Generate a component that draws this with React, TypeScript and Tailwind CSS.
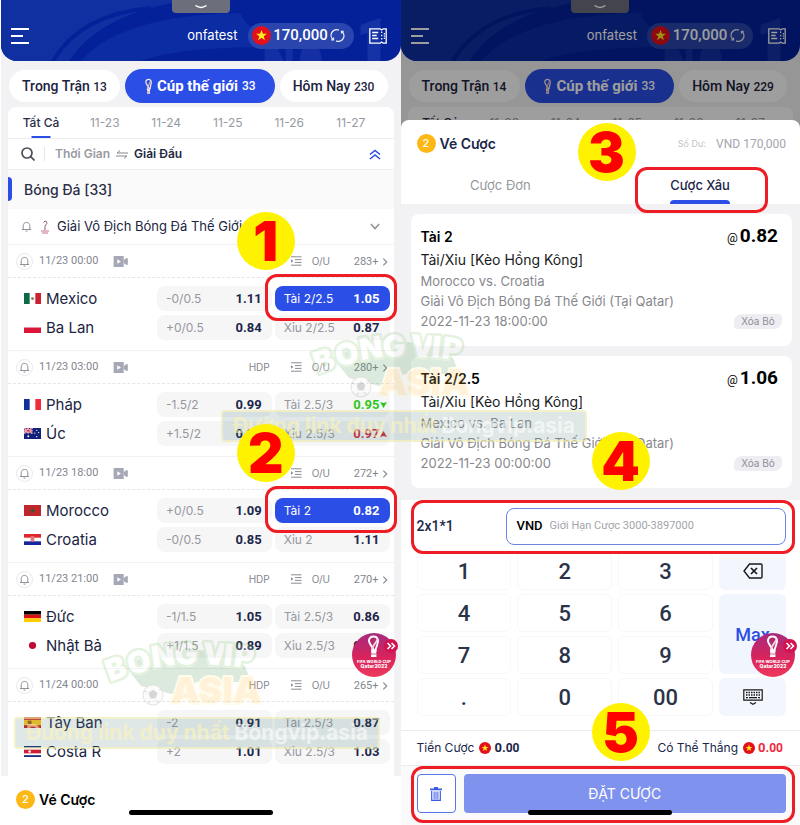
import React from "react";
import clsx from "clsx";

const DIN = "font-[Roboto,'Noto_Sans',sans-serif]";
const UI = "font-[Inter,'Noto_Sans',sans-serif]";

/* ---------- icons ---------- */

function VnCoin({ className }: { className: string }) {
  return (
    <svg viewBox="0 0 20 20" className={className} aria-hidden="true">
      <circle cx="10" cy="10" r="10" fill="#e3101c" />
      <path
        d="M10 4.2l1.5 4h4.2l-3.4 2.6 1.3 4.1L10 12.4l-3.6 2.5 1.3-4.1-3.4-2.6h4.2z"
        fill="#ffec1c"
      />
    </svg>
  );
}

function RefreshIcon() {
  return (
    <svg viewBox="0 0 16 16" className="h-[15px] w-[15px]" fill="none" stroke="#e8ebf8" strokeWidth="1.4" aria-hidden="true">
      <path d="M3.400 12.400A6 6 0 0 1 9.500 2.200" />
      <path d="M12.600 3.600A6 6 0 0 1 6.500 13.800" />
      <path d="M1.300 12.600h2.500v-2.400M14.700 3.400h-2.500v2.400" strokeWidth="1.200" />
    </svg>
  );
}

function TicketIcon() {
  return (
    <svg viewBox="0 0 18 16" className="h-4 w-[18px]" fill="none" stroke="#fff" strokeWidth="1.3" aria-hidden="true">
      <path d="M.8.800h10.400l1.500 1.200 1.500-1.200h3v14.400h-3l-1.500-1.200-1.500 1.200H.8z" />
      <path d="M3.200 4.500h6M3.200 7.500h4.500M3.200 10.500h6" />
      <path d="M12.700 3.500v9.500" strokeDasharray="1.600 1.600" />
      <path d="M15.400 5v6" strokeDasharray="1.400 1" />
    </svg>
  );
}

function TrophyIcon({ className }: { className: string }) {
  return (
    <svg viewBox="0 0 10 18" className={className} fill="none" aria-hidden="true">
      <path d="M6.800 12C6.500 9 8.500 6.500 8 3.600 7.600 1.700 6.400 1 5 1S2.400 1.700 2 3.600C1.600 6 4.500 8 6 12" stroke="#f3e9ee" strokeWidth="1.400" />
      <path d="M7.500 3C6 6 3.500 8.500 3.600 13" stroke="#d9b9a8" strokeWidth="1.200" />
      <path d="M3.600 11.500h3l.2 5.500H3.400z" fill="#f3e9ee" />
      <path d="M3.300 15h3.400" stroke="#c58f86" strokeWidth="1" />
    </svg>
  );
}

function BellIcon() {
  return (
    <svg viewBox="0 0 12 12" className="h-[11px] w-[11px] shrink-0" fill="none" stroke="#85878f" strokeWidth="1" aria-hidden="true">
      <path d="M1 9.300h10M2.400 9.300V5.200C2.400 3 4 1.500 6 1.500s3.600 1.500 3.600 3.700v4.100" />
      <path d="M5 11h2" />
    </svg>
  );
}

function CameraIcon() {
  return (
    <svg viewBox="0 0 16 12" className="h-[11px] w-[15px]" fill="#a6a9b5" aria-hidden="true">
      <path fillRule="evenodd" d="M.5 0H11.500v12H.5zM4.500 3.500v5L8.500 6z" />
      <path d="M11.500 4l2-.8V2.500H16v7h-2.500v-.8l-2-.8z" />
    </svg>
  );
}

function ListIcon() {
  return (
    <svg viewBox="0 0 12 10" className="h-[10px] w-3" stroke="#8a8c94" strokeWidth="1" fill="none" aria-hidden="true">
      <path d="M1 .8h10.500M5 3.600h6.500M5 6.400h6.500M1 9.200h10.500" />
      <path d="M1 3.300v3.400L3.300 5z" fill="#8a8c94" stroke="none" />
    </svg>
  );
}

function Chevron({ className, points, viewBox = "0 0 8 12" }: { className: string; points: string; viewBox?: string }) {
  return (
    <svg viewBox={viewBox} className={className} fill="none" stroke="currentColor" strokeWidth="1.700" aria-hidden="true">
      <polyline points={points} />
    </svg>
  );
}

function Flag({ code }: { code: string }) {
  const art: Record<string, React.ReactNode> = {
    mx: (<><path fill="#fff" d="M0 0h18v12H0z" /><path fill="#0b6b49" d="M0 0h6v12H0z" /><path fill="#cd1f32" d="M12 0h6v12h-6z" /><circle cx="9" cy="6" r="1.500" fill="#8c6b45" /></>),
    pl: (<><path fill="#fff" d="M0 0h18v6H0z" /><path fill="#dc1638" d="M0 6h18v6H0z" /></>),
    fr: (<><path fill="#fff" d="M0 0h18v12H0z" /><path fill="#11309a" d="M0 0h6v12H0z" /><path fill="#f02b3d" d="M12 0h6v12h-6z" /></>),
    au: (<><path fill="#12227c" d="M0 0h18v12H0z" /><path d="M0 0l9 6M9 0L0 6M4.500 0v6M0 3h9" stroke="#fff" strokeWidth="1.600" /><path d="M4.500 0v6M0 3h9M0 0l9 6M9 0L0 6" stroke="#d8213c" strokeWidth=".700" /><circle cx="4.500" cy="9" r="1" fill="#fff" /><circle cx="13.500" cy="2.500" r=".700" fill="#fff" /><circle cx="13.500" cy="9.500" r=".700" fill="#fff" /><circle cx="11.500" cy="5.500" r=".700" fill="#fff" /><circle cx="15.500" cy="5" r=".700" fill="#fff" /></>),
    ma: (<><path fill="#c0272d" d="M0 0h18v12H0z" /><path d="M9 3l.8 2.200h2.300l-1.900 1.400.7 2.300L9 7.500 7.100 8.900l.7-2.300L5.900 5.200h2.300z" fill="#2f5a2e" /></>),
    hr: (<><path fill="#fff" d="M0 0h18v12H0z" /><path fill="#e0252b" d="M0 0h18v4H0z" /><path fill="#17259a" d="M0 8h18v4H0z" /><path fill="#e8777b" d="M7 2.500h4v4.500L9 8.500 7 7z" /></>),
    de: (<><path fill="#000" d="M0 0h18v4H0z" /><path fill="#dd1010" d="M0 4h18v4H0z" /><path fill="#ffce00" d="M0 8h18v4H0z" /></>),
    jp: (<><path fill="#fff" d="M0 0h18v12H0z" /><circle cx="9" cy="6" r="3.800" fill="#c00a35" /></>),
    es: (<><path fill="#c8191f" d="M0 0h18v12H0z" /><path fill="#ffc61a" d="M0 3h18v6H0z" /><path fill="#a5572b" d="M4 4h4v4H4z" /></>),
    cr: (<><path fill="#17307c" d="M0 0h18v12H0z" /><path fill="#fff" d="M0 2h18v8H0z" /><path fill="#ce1c31" d="M0 4h18v4H0z" /><circle cx="6" cy="6" r="1.400" fill="#fff" /></>),
  };
  return (
    <svg viewBox="0 0 18 12" preserveAspectRatio="none" className="h-[11px] w-[17px] shrink-0" aria-hidden="true">
      {art[code]}
    </svg>
  );
}

/* ---------- tutorial marks ---------- */

function Step({ n, className }: { n: number; className: string }) {
  return (
    <span
      className={clsx(
        "pointer-events-none absolute z-40 flex h-[58px] w-[58px] items-center justify-center rounded-full bg-[#fff200] text-[55px] leading-none font-black text-[#ff0000]",
        UI,
        className,
      )}
    >
      {n}
    </span>
  );
}

function Ring({ className }: { className: string }) {
  return <span className={clsx("pointer-events-none absolute z-30 rounded-xl border-[3px] border-[#ee1c24]", className)} />;
}

function WatermarkLogo({ className }: { className: string }) {
  return (
    <svg viewBox="0 0 160 74" className={clsx("pointer-events-none absolute z-20 h-[74px] w-[160px] overflow-visible opacity-20", className)} aria-hidden="true">
      <path d="M20 30Q80-4 140 30l6 16H92l-26 12-30-8z" fill="#4f9a55" />
      <g fontFamily="Inter, sans-serif" fontWeight="900" strokeLinejoin="round">
        <g fill="#fff" stroke="#7fc36a" strokeWidth="5" paintOrder="stroke" fontSize="30">
          <text x="5" y="46" transform="rotate(-20 5 46)">B</text>
          <text x="25" y="39" transform="rotate(-14 25 39)">O</text>
          <text x="48" y="32" transform="rotate(-8 48 32)">N</text>
          <text x="70" y="29" transform="rotate(-2 70 29)">G</text>
          <text x="97" y="28" transform="rotate(4 97 28)">V</text>
          <text x="118" y="29" transform="rotate(6 118 29)">I</text>
          <text x="128" y="30" transform="rotate(8 128 30)">P</text>
        </g>
        <text x="66" y="67" fontSize="36" fill="#ffc040" stroke="#fff3b0" strokeWidth="4" paintOrder="stroke">ASIA</text>
      </g>
      <circle cx="48" cy="59" r="10" fill="#eee" stroke="#777" />
      <path d="M48 54l4 3-1.500 5h-5L44 57zM39 55l3 1M54 53l3 1M44 68l1-3M53 67l-2-3" fill="#333" stroke="#555" />
    </svg>
  );
}

function WatermarkBar({ className }: { className: string }) {
  return (
    <div
      className={clsx(
        "pointer-events-none absolute z-20 flex h-8 w-[366px] items-center justify-center rounded border-2 border-[#fff6b8]/60 bg-[#4f7d78]/18 text-[21px] font-bold whitespace-pre",
        UI,
        className,
      )}
    >
      <span className="text-[#fff5b4]/55">Đường link duy nhất </span>
      <span className="text-white/55">Bongvip.asia</span>
    </div>
  );
}

function CupBadge() {
  return (
    <button type="button" aria-label="FIFA World Cup Qatar 2022" className="absolute top-[632px] right-1 z-30 h-[46px] w-[46px]">
      <svg viewBox="0 0 46 46" className="h-[46px] w-[46px] overflow-visible">
        <defs>
          <linearGradient id="cup" x1="0" y1="0" x2="0" y2="1">
            <stop offset="0" stopColor="#a62c7e" />
            <stop offset=".55" stopColor="#d8235c" />
            <stop offset="1" stopColor="#ee3a5c" />
          </linearGradient>
        </defs>
        <circle cx="23" cy="23" r="22" fill="url(#cup)" />
        <path d="M24.500 20C24 15 28 12 27 8c-.6-2.600-2.300-3.500-4.500-3.500S18.600 5.400 18 8c-.8 4 4 6 5.500 12" fill="none" stroke="#fff" strokeWidth="1.900" />
        <path d="M26.500 7C25 12 20 14 21 20" fill="none" stroke="#f2d6df" strokeWidth="1.800" />
        <path d="M20.500 17.500h4.500l.5 7.500h-5.500z" fill="#fff" />
        <path d="M20 22h5.500" stroke="#c26a86" />
        <g fill="#fff" fontFamily="Inter, sans-serif" fontWeight="800" textAnchor="middle">
          <text x="23" y="31" fontSize="4">FIFA WORLD CUP</text>
          <text x="23" y="36" fontSize="5">Qatar2022</text>
        </g>
        <circle cx="40" cy="14" r="7" fill="#d3124f" />
        <path d="M36.500 11l3 3-3 3M40.500 11l3 3-3 3" fill="none" stroke="#fff" strokeWidth="1.600" />
      </svg>
    </button>
  );
}

/* ---------- shared top ---------- */

function TopBar() {
  return (
    <header className={clsx("relative flex h-[61px] items-center overflow-hidden rounded-b-2xl bg-[#04219a] pt-[10px] pr-[14px] pl-[10px] text-white", DIN)}>
      <svg viewBox="0 0 400 61" preserveAspectRatio="none" className="absolute inset-0 h-full w-full" aria-hidden="true">
        <path d="M0 0h190Q100 12 68 61H0z" fill="#1030a2" />
        <path d="M80 61Q120 15 240 13q5 22 70 34Q180 45 140 61z" fill="#0c2ca3" />
        <path d="M52 61Q80 14 150 8" stroke="#04219a" strokeWidth="4" fill="none" />
        <path d="M264 61V40h9l10 21zM285 61V40h7v21zM299 61q0-16 11-16t11 16z" fill="#132fa3" />
        <path d="M360 25l20-7v43h-13V33l-7 2z" fill="#1633a5" />
      </svg>
      <span className="absolute top-0 left-1/2 flex h-[13px] w-[58px] -translate-x-1/2 justify-center rounded-b bg-[#6d6e7c] pt-[5px]">
        <svg viewBox="0 0 12 4" className="h-1 w-3" fill="none" stroke="#fff" strokeWidth="1.500" aria-hidden="true">
          <path d="M.5.5Q6 4.500 11.500.5" />
        </svg>
      </span>
      <button type="button" aria-label="Menu" className="relative flex h-4 flex-col justify-between">
        <span className="h-0.5 w-[18px] bg-white" />
        <span className="h-0.5 w-3 bg-white" />
        <span className="h-0.5 w-[18px] bg-white" />
      </button>
      <span className={clsx("relative ml-auto text-[13px]", UI)}>onfatest</span>
      <span className="relative ml-[10px] flex h-[26px] w-[106px] items-center justify-between rounded-full bg-[#2a46ae] pr-2 pl-1">
        <VnCoin className="h-[19px] w-[19px]" />
        <span className="text-[15px] font-medium">170,000</span>
        <RefreshIcon />
      </span>
      <button type="button" aria-label="Phiếu cược" className="relative ml-[15px]">
        <TicketIcon />
      </button>
    </header>
  );
}

function FilterPills({ live, today }: { live: string; today: string }) {
  return (
    <nav className={clsx("flex items-center gap-[5px] px-2 pt-2 pr-[13px] font-medium text-[#1c2340]", DIN)}>
      <button type="button" className="h-8 w-[111px] rounded-full bg-white text-[14px] whitespace-nowrap">
        Trong Trận <span className="text-[12px]">{live}</span>
      </button>
      <button type="button" className="flex h-[34px] flex-1 items-center justify-center gap-1 rounded-full bg-[#2b4ee6] text-[15px] font-bold whitespace-nowrap text-white">
        <TrophyIcon className="h-[17px] w-[9px]" />
        Cúp thế giới <span className="text-[12px] font-medium">33</span>
      </button>
      <button type="button" className="h-8 w-[108px] rounded-full bg-white text-[14px] whitespace-nowrap">
        Hôm Nay <span className="text-[12px]">{today}</span>
      </button>
    </nav>
  );
}

const dates = ["11-23", "11-24", "11-25", "11-26", "11-27"];

function DateTabs() {
  return (
    <div className={clsx("flex h-8 items-center border-b border-[#ededf0] text-[12px] text-[#989aa2]", UI)}>
      <button type="button" className="relative h-full w-[66px] font-medium text-[#2a2e45]">
        Tất Cả
        <span className="absolute bottom-0 left-1/2 h-0.5 w-[19px] -translate-x-1/2 bg-[#2b4ee6]" />
      </button>
      {dates.map((d) => (
        <button key={d} type="button" className="h-full flex-1">
          {d}
        </button>
      ))}
      <span className="w-3" />
    </div>
  );
}

/* ---------- left screen ---------- */

type Line = { team: string; flag: string; hdp: string; hdpOdd: string; ou: string; ouOdd: string; trend?: "up" | "down"; picked?: boolean; step?: number };
type Match = { time: string; more: string; stream: boolean; lines: Line[] };

const matches: Match[] = [
  { time: "11/23 00:00", more: "283+", stream: true, lines: [
    { team: "Mexico", flag: "mx", hdp: "-0/0.5", hdpOdd: "1.11", ou: "Tài 2/2.5", ouOdd: "1.05", picked: true, step: 1 },
    { team: "Ba Lan", flag: "pl", hdp: "+0/0.5", hdpOdd: "0.84", ou: "Xỉu 2/2.5", ouOdd: "0.87" } ] },
  { time: "11/23 03:00", more: "280+", stream: true, lines: [
    { team: "Pháp", flag: "fr", hdp: "-1.5/2", hdpOdd: "0.99", ou: "Tài 2.5/3", ouOdd: "0.95", trend: "down" },
    { team: "Úc", flag: "au", hdp: "+1.5/2", hdpOdd: "0.85", ou: "Xỉu 2.5/3", ouOdd: "0.97", trend: "up" } ] },
  { time: "11/23 18:00", more: "272+", stream: true, lines: [
    { team: "Morocco", flag: "ma", hdp: "+0/0.5", hdpOdd: "1.09", ou: "Tài 2", ouOdd: "0.82", picked: true, step: 2 },
    { team: "Croatia", flag: "hr", hdp: "-0/0.5", hdpOdd: "0.85", ou: "Xỉu 2", ouOdd: "1.11" } ] },
  { time: "11/23 21:00", more: "270+", stream: true, lines: [
    { team: "Đức", flag: "de", hdp: "-1/1.5", hdpOdd: "1.05", ou: "Tài 2.5/3", ouOdd: "0.86" },
    { team: "Nhật Bả", flag: "jp", hdp: "+1/1.5", hdpOdd: "0.89", ou: "Xỉu 2.5/3", ouOdd: "0.88" } ] },
  { time: "11/24 00:00", more: "265+", stream: false, lines: [
    { team: "Tây Ban", flag: "es", hdp: "-2", hdpOdd: "0.91", ou: "Tài 2.5/3", ouOdd: "0.87" },
    { team: "Costa R", flag: "cr", hdp: "+2", hdpOdd: "1.01", ou: "Xỉu 2.5/3", ouOdd: "1.03" } ] },
];

function Odd({ label, value, line }: { label: string; value: string; line?: Line }) {
  const picked = line?.picked;
  const trend = line?.trend;
  return (
    <button
      type="button"
      className={clsx(
        "relative flex h-[25px] flex-1 items-center justify-between rounded-lg pr-[10px] pl-[9px]",
        picked ? "bg-[#2b4ee6] text-white" : "bg-[#f6f6f7] text-[#96979d]",
      )}
    >
      <span className={clsx("text-[12px]", UI)}>{label}</span>
      <span
        className={clsx(
          "text-[13px] font-bold",
          DIN,
          picked && "text-white",
          !picked && !trend && "text-[#20264a]",
          trend === "down" && "text-[#2fc61c]",
          trend === "up" && "text-[#d02c3a]",
        )}
      >
        {value}
      </span>
      {trend && (
        <svg viewBox="0 0 7 6" className={clsx("absolute right-[3px] h-1.5 w-[7px]", trend === "down" ? "text-[#2fc61c]" : "text-[#d02c3a]")} fill="currentColor" aria-hidden="true">
          <path d={trend === "down" ? "M0 0l3.500 1L7 0 3.500 6z" : "M0 6l3.500-1L7 6 3.500 0z"} />
        </svg>
      )}
      {line?.step && (
        <>
          <Ring className="-top-3 -right-[7px] -bottom-[10px] -left-[10px]" />
          <Step n={line.step} className="-top-[74px] -left-[38px]" />
        </>
      )}
    </button>
  );
}

function MatchBlock({ m }: { m: Match }) {
  return (
    <section className="border-t border-[#f1f1f3] pb-[10px]">
      <div className={clsx("flex h-[33px] items-center border-b border-dashed border-[#e6e6e9] pr-1.5 pl-2 text-[#84868f]", DIN)}>
        <button type="button" aria-label="Nhắc trận đấu" className="flex h-[17px] w-[17px] items-center justify-center rounded-full border border-[#e9e9ec]">
          <BellIcon />
        </button>
        <span className="ml-[6px] w-[74px] text-[11px] whitespace-nowrap">{m.time}</span>
        {m.stream && <CameraIcon />}
        <span className={clsx("ml-auto text-[10px]", UI)}>HDP</span>
        <span className="ml-5 w-[22px]">
          <ListIcon />
        </span>
        <span className={clsx("w-[42px] text-[10px]", UI)}>O/U</span>
        <a href="#more" className="flex items-center gap-[3px] pt-0.5 text-[11px]">
          {m.more}
          <Chevron className="h-2 w-[6px]" points="1.500,1 6.500,6 1.500,11" />
        </a>
      </div>
      <div className="flex flex-col gap-1 pt-2 pr-1 pl-4">
        {m.lines.map((l) => (
          <div key={l.team} className="flex items-center gap-[3px]">
            <div className={clsx("flex w-[130px] items-center gap-[5px] text-[15px] leading-5 text-[#20243f]", UI)}>
              <Flag code={l.flag} />
              {l.team}
            </div>
            <Odd label={l.hdp} value={l.hdpOdd} />
            <Odd label={l.ou} value={l.ouOdd} line={l} />
          </div>
        ))}
      </div>
    </section>
  );
}

function SlipTitle() {
  return (
    <div className={clsx("flex items-center gap-1 text-[14px] font-semibold", UI)}>
      <span className="flex h-[19px] w-[19px] items-center justify-center rounded-full bg-[#fcb814] text-[11px] font-medium text-white">2</span>
      Vé Cược
    </div>
  );
}

function HomeIndicator() {
  return <span className="absolute bottom-[10px] left-1/2 z-10 h-[5px] w-[144px] -translate-x-1/2 rounded-full bg-black" />;
}

function MatchScreen() {
  return (
    <div className="relative flex flex-col bg-[#f2f2f4]">
      <TopBar />
      <FilterPills live="13" today="230" />
      <main className="mx-[7px] mt-1 flex-1 rounded-t-lg bg-white">
        <DateTabs />
        <div className={clsx("flex h-[31px] items-center border-b border-[#ededf0] pr-[13px] pl-[13px] text-[12px] font-semibold", UI)}>
          <button type="button" aria-label="Tìm kiếm">
            <svg viewBox="0 0 14 14" className="h-[14px] w-[14px]" fill="none" stroke="#4d4f58" strokeWidth="1.700" aria-hidden="true">
              <circle cx="6" cy="6" r="5" />
              <path d="M9.700 9.700L13.500 13.500" />
            </svg>
          </button>
          <span className="mr-[10px] ml-[9px] h-3.5 w-px bg-[#e6e6ea]" />
          <button type="button" className="text-[#989aa2]">Thời Gian</button>
          <svg viewBox="0 0 12 9" className="mx-[6px] h-[9px] w-3" fill="none" stroke="#85878f" strokeWidth="1" aria-hidden="true">
            <path d="M12 3H1l3-2.500M0 6h11L8 8.500" />
          </svg>
          <button type="button" className="text-[#232742]">Giải Đấu</button>
          <button type="button" aria-label="Thu gọn" className="ml-auto text-[#2b4ee6]">
            <svg viewBox="0 0 12 11" className="h-[11px] w-3" fill="none" stroke="currentColor" strokeWidth="1.600" aria-hidden="true">
              <path d="M1 5.500l5-4 5 4M1 10l5-4 5 4" />
            </svg>
          </button>
        </div>
        <div className="relative flex h-[39px] items-center bg-[#fafafb] pl-4">
          <span className="absolute top-[7px] left-0 h-6 w-1 rounded-r bg-[#2b4ee6]" />
          <h2 className={clsx("text-[14px] font-medium text-[#2a2e45]", UI)}>Bóng Đá [33]</h2>
        </div>
        <div className={clsx("flex h-[35px] items-center pr-[14px] pl-[13px] text-[13px] text-[#20243f]", UI)}>
          <BellIcon />
          <svg viewBox="0 0 10 14" className="mr-[7px] ml-2 h-[14px] w-[10px]" fill="none" aria-hidden="true">
            <path d="M3.500 2.500Q5 0 6.500 1.500T5 6v4" stroke="#8d6470" />
            <path d="M1 11h8M2 13h6" stroke="#cf6c7c" />
          </svg>
          <span className="whitespace-nowrap">Giải Vô Địch Bóng Đá Thế Giới</span>
          <button type="button" aria-label="Mở rộng" className="ml-auto text-[#8f9198]">
            <Chevron className="h-[7px] w-[10px]" viewBox="0 0 12 8" points="1,1 6,6.500 11,1" />
          </button>
        </div>
        {matches.map((m) => (
          <MatchBlock key={m.time} m={m} />
        ))}
      </main>
      <footer className="relative h-[49px] bg-white pt-[13px] pl-[15px] text-black">
        <SlipTitle />
        <HomeIndicator />
      </footer>
      <CupBadge />
    </div>
  );
}

/* ---------- right screen ---------- */

function BetCard({ pick, odd, teams, date, step }: { pick: string; odd: string; teams: string; date: string; step?: number }) {
  return (
    <article className={clsx("relative h-[132px] rounded-lg bg-white pt-[11px] pr-[14px] pl-[10px]", UI)}>
      <div className="flex h-[23px] items-center justify-between text-black">
        <h3 className="text-[14px] font-semibold">{pick}</h3>
        <p className={clsx("flex items-baseline gap-0.5 text-[19px] font-bold", DIN)}>
          <span className="text-[12px] font-normal">@</span>
          {odd}
        </p>
      </div>
      <p className="text-[14px] leading-[23px] text-[#1b1b1d]">Tài/Xỉu [Kèo Hồng Kông]</p>
      <p className="text-[13px] leading-5 text-[#87888d]">{teams}</p>
      <p className="text-[13px] leading-5 text-[#87888d]">Giải Vô Địch Bóng Đá Thế Giới (Tại Qatar)</p>
      <div className="flex items-center justify-between">
        <p className="text-[13px] leading-5 text-[#87888d]">{date}</p>
        <button type="button" className="-mr-1 h-[15px] w-12 rounded-tl-lg rounded-tr rounded-br-lg rounded-bl bg-[#ededf2] text-[10px] leading-none text-[#8f9097]">
          Xóa Bỏ
        </button>
      </div>
      {step && <Step n={step} className="-bottom-[2px] left-[181px]" />}
    </article>
  );
}

function Key({ children }: { children: React.ReactNode }) {
  return (
    <button type="button" className="rounded-md border border-[#f8f8fa] text-[22px] font-medium text-[#2b3348]">
      {children}
    </button>
  );
}

function Keypad() {
  return (
    <div className={clsx("grid auto-rows-[38px] grid-cols-[1fr_1fr_1fr_67px] gap-x-[6px] gap-y-1 px-4 pr-[14px]", DIN)}>
      <Key>1</Key>
      <Key>2</Key>
      <Key>3</Key>
      <button type="button" aria-label="Xóa" className="flex items-center justify-center rounded-md bg-[#f4f6fd]">
        <svg viewBox="0 0 20 16" className="h-4 w-5" fill="none" stroke="#17181c" strokeWidth="1.400" aria-hidden="true">
          <path d="M6.500 1H18q1 0 1 1v12q0 1-1 1H6.500L1 8z" />
          <path d="M8 5l6 6M14 5l-6 6" strokeWidth="1.700" />
        </svg>
      </button>
      <Key>4</Key>
      <Key>5</Key>
      <Key>6</Key>
      <button type="button" className="row-span-2 rounded-md bg-[#f1f5fd] text-[18px] font-medium text-[#2b4ee6]">
        Max
      </button>
      <Key>7</Key>
      <Key>8</Key>
      <Key>9</Key>
      <Key>.</Key>
      <Key>0</Key>
      <Key>00</Key>
      <button type="button" aria-label="Ẩn bàn phím" className="flex items-center justify-center rounded-md bg-[#f4f6fd]">
        <svg viewBox="0 0 20 16" className="h-4 w-5" fill="none" stroke="#17181c" strokeWidth="1.200" aria-hidden="true">
          <path d="M.8.800h18.400v10.400H.8zM7 13.500l3 1.700 3-1.700" />
          <path d="M3 3.500h14M3 6h14" strokeDasharray="1.500 1" strokeWidth="1.400" />
          <path d="M3 8.700h2M6 8.700h8M15 8.700h2" strokeWidth="1.300" />
        </svg>
      </button>
    </div>
  );
}

function SlipScreen() {
  return (
    <div className="relative flex flex-col bg-[#f2f2f4]">
      <div className="h-32 overflow-hidden">
        <TopBar />
        <FilterPills live="14" today="229" />
        <div className="mx-[7px] mt-1 rounded-t-lg bg-white">
          <DateTabs />
        </div>
      </div>
      <div className="absolute inset-x-0 top-0 h-32 bg-black/38" />
      <div className="relative -mt-2 flex flex-1 flex-col rounded-t-lg bg-white">
        <div className="relative flex h-[47px] items-center pr-[14px] pl-4 text-[#20264a]">
          <SlipTitle />
          <span className={clsx("ml-auto text-[9px] text-[#c2c3c9]", UI)}>Số Dư:</span>
          <span className={clsx("ml-[10px] text-[12px] text-[#a3a5ad]", DIN)}>VND 170,000</span>
          <Step n={3} className="top-[3px] left-[177px]" />
        </div>
        <div className={clsx("grid h-[37px] grid-cols-2 text-[13px]", UI)}>
          <button type="button" className="text-[#96979d]">Cược Đơn</button>
          <button type="button" className="relative font-medium text-[#20264a]">
            Cược Xâu
            <span className="absolute bottom-0 left-1/2 h-1 w-[60px] -translate-x-1/2 rounded-t bg-[#2b4ee6]" />
            <Ring className="-bottom-[9px] left-[35px] h-[46px] w-[133px]" />
          </button>
        </div>
        <div className="flex flex-1 flex-col gap-[10px] bg-[#f2f2f4] px-[10px] pt-[10px] pr-2 pb-[9px]">
          <BetCard pick="Tài 2" odd="0.82" teams="Morocco vs. Croatia" date="2022-11-23 18:00:00" />
          <BetCard pick="Tài 2/2.5" odd="1.06" teams="Mexico vs. Ba Lan" date="2022-11-23 00:00:00" step={4} />
        </div>
        <div className="relative flex h-[52px] items-center pr-[14px] pl-4">
          <label htmlFor="stake" className={clsx("w-[89px] text-[14px] font-medium text-[#20264a]", DIN)}>2x1*1</label>
          <div className={clsx("flex h-[37px] flex-1 items-center gap-[7px] rounded-lg border border-[#6d84e6] px-[10px]", DIN)}>
            <span className="text-[13px] font-medium text-black">VND</span>
            <input id="stake" type="text" placeholder="Giới Hạn Cược 3000-3897000" className="min-w-0 flex-1 bg-transparent text-[11px] outline-none placeholder:text-[#a3a4aa]" />
          </div>
          <Ring className="top-0 right-[5px] -bottom-[2px] left-[10px]" />
        </div>
        <Keypad />
        <div className={clsx("relative mt-[14px] flex h-9 items-center border-y border-[#ececef] pr-[17px] pl-4 text-[12px] text-[#20264a]", UI)}>
          <span>Tiền Cược</span>
          <VnCoin className="mr-[3px] ml-[5px] h-3 w-3" />
          <span className={clsx("text-[13px] font-bold", DIN)}>0.<span className="text-[12px]">00</span></span>
          <span className="ml-auto">Có Thể Thắng</span>
          <VnCoin className="mr-[3px] ml-[5px] h-3 w-3" />
          <span className={clsx("text-[13px] font-bold text-[#ee2a3c]", DIN)}>0.<span className="text-[12px]">00</span></span>
          <Step n={5} className="-top-[28px] left-[191px]" />
        </div>
        <div className="relative flex h-[59px] gap-2 bg-[#fafafb] pt-2 pr-[14px] pl-4">
          <button type="button" aria-label="Xóa tất cả" className="flex h-[39px] w-[39px] items-center justify-center rounded border border-[#5a76e8] bg-white">
            <svg viewBox="0 0 12 14" className="h-[14px] w-3" aria-hidden="true">
              <path d="M0 1.500h12v1.800H0zM4 0h4v1.500H4z" fill="#3a5be8" />
              <path d="M1.700 4v9.300h8.600V4" fill="none" stroke="#3a5be8" strokeWidth="1.200" />
              <path d="M4.100 4.500v8M6 4.500v8M7.900 4.500v8" stroke="#3a5be8" strokeWidth="1" />
            </svg>
          </button>
          <button type="button" className={clsx("h-[39px] flex-1 rounded bg-[#7f92ee] text-[14px] text-white", UI)}>ĐẶT CƯỢC</button>
          <HomeIndicator />
          <Ring className="top-0 right-[5px] bottom-[2px] left-[10px]" />
        </div>
      </div>
      <CupBadge />
    </div>
  );
}

export default function App() {
  return (
    <div className="relative grid min-h-screen grid-cols-2 overflow-hidden bg-white pl-px">
      <MatchScreen />
      <SlipScreen />
      <WatermarkLogo className="top-[328px] left-[313px]" />
      <WatermarkBar className="top-[410px] left-[221px]" />
      <WatermarkLogo className="top-[636px] left-[105px]" />
      <WatermarkBar className="top-[717px] left-[14px]" />
    </div>
  );
}
